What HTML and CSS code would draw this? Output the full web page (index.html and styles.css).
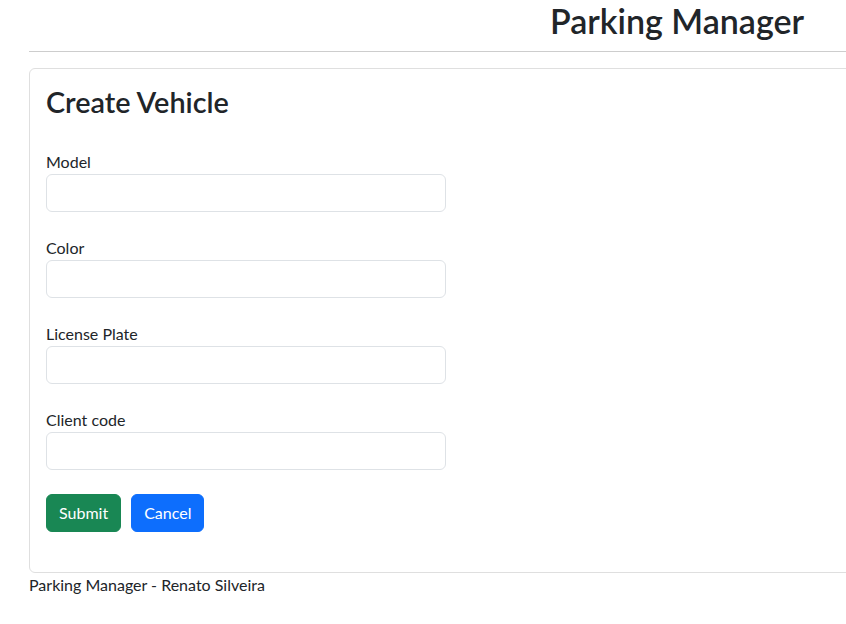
FILE: index.html
```html
<!DOCTYPE html>
<html lang="en">
<head>
<meta charset="utf-8">
<title>Create Vehicle - Parking Manager</title>
<link rel="stylesheet" href="styles.css">
</head>
<body>
<div class="container">
  <header class="page-header">
    <h1 class="brand">Parking Manager</h1>
  </header>
  <hr class="divider">
  <main class="card">
    <div class="card-body">
      <h2 class="card-title">Create Vehicle</h2>
      <form class="form">
        <div class="field">
          <label class="label" for="model">Model</label>
          <input class="input" id="model" type="text">
        </div>
        <div class="field">
          <label class="label" for="color">Color</label>
          <input class="input" id="color" type="text">
        </div>
        <div class="field">
          <label class="label" for="plate">License Plate</label>
          <input class="input" id="plate" type="text">
        </div>
        <div class="field">
          <label class="label" for="client">Client code</label>
          <input class="input" id="client" type="text">
        </div>
        <div class="actions">
          <button type="submit" class="btn btn-success">Submit</button>
          <button type="button" class="btn btn-primary">Cancel</button>
        </div>
      </form>
    </div>
  </main>
  <footer class="footer">Parking Manager - Renato Silveira</footer>
</div>
</body>
</html>
```
FILE: styles.css
```css
html, body {
  margin: 0;
  padding: 0;
  background: #fff;
  overflow: hidden;
}
body {
  font-family: Lato, "Noto Sans", sans-serif;
  font-size: 16px;
  line-height: 1.5;
  color: #212529;
}
.container {
  width: 1296px;
  margin-left: 29px;
}
.page-header {
  text-align: center;
}
.brand {
  margin: 0;
  font-size: 34px;
  line-height: 41.6px;
  font-weight: 600;
  color: #212529;
}
.divider {
  margin: 9px 0 16px;
  border: 0;
  border-top: 1px solid #cdcdcd;
  height: 0;
}
.card {
  display: block;
  border: 1px solid #dfdfdf;
  border-radius: 6px;
  background: #fff;
}
.card-body {
  padding: 16px;
}
.card-title {
  margin: 0 0 31px;
  font-size: 28.8px;
  line-height: 34.6px;
  font-weight: 600;
}
.form {
  display: flex;
  flex-direction: column;
}
.field {
  display: flex;
  flex-direction: column;
  margin-bottom: 24px;
}
.label {
  display: block;
  line-height: 24px;
}
.input {
  box-sizing: border-box;
  width: 400px;
  height: 38px;
  border: 1px solid #dee2e6;
  border-radius: 6px;
  padding: 6px 12px;
  font: inherit;
  background: #fff;
}
.actions {
  display: flex;
  gap: 10px;
  margin-bottom: 24px;
}
.btn {
  height: 38px;
  padding: 6px 12px;
  border: 1px solid transparent;
  border-radius: 6px;
  font: inherit;
  color: #fff;
  cursor: pointer;
}
.btn-success {
  background: #198754;
  border-color: #198754;
}
.btn-primary {
  background: #0d6efd;
  border-color: #0d6efd;
}
.footer {
  line-height: 24px;
}
```
